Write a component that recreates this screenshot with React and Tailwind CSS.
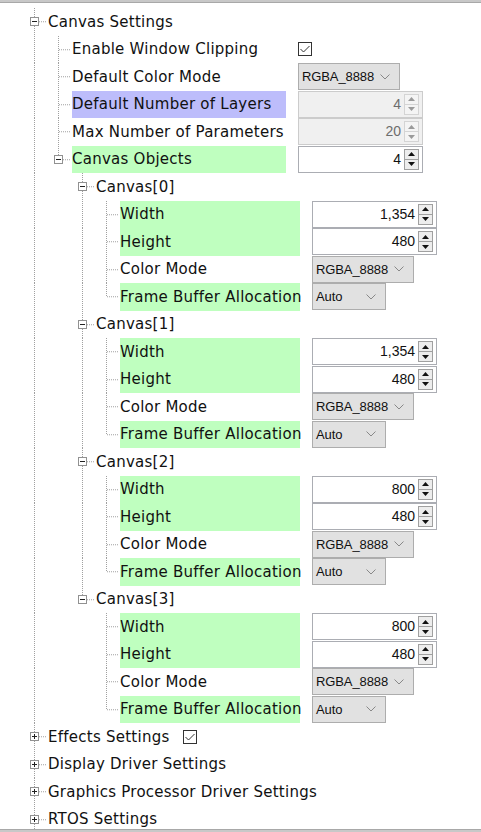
import React from 'react';

const GREEN = 'bg-[#bfffbf]';
const LAVENDER = 'bg-[#bdbdfb]';

// guides: ancestor levels whose line passes through the row, conn: own connector shape
const rows = [
  { level: 0, label: 'Canvas Settings', exp: 'minus', guides: [], conn: 'T' },
  { level: 1, label: 'Enable Window Clipping', guides: [0], conn: 'T', lw: 'w-[214px]', value: { type: 'check' } },
  { level: 1, label: 'Default Color Mode', guides: [0], conn: 'T', lw: 'w-[214px]', value: { type: 'select', text: 'RGBA_8888', w: 'w-[102px]' } },
  { level: 1, label: 'Default Number of Layers', guides: [0], conn: 'T', lw: 'w-[214px]', hl: LAVENDER, value: { type: 'spin', text: '4', disabled: true } },
  { level: 1, label: 'Max Number of Parameters', guides: [0], conn: 'T', lw: 'w-[214px]', value: { type: 'spin', text: '20', disabled: true } },
  { level: 1, label: 'Canvas Objects', exp: 'minus', guides: [0], conn: 'L', lw: 'w-[214px]', hl: GREEN, value: { type: 'spin', text: '4' } },
];

const canvases = [
  { name: 'Canvas[0]', width: '1,354', last: false },
  { name: 'Canvas[1]', width: '1,354', last: false },
  { name: 'Canvas[2]', width: '800', last: false },
  { name: 'Canvas[3]', width: '800', last: true },
];

canvases.forEach((c) => {
  const g = c.last ? [0] : [0, 2];
  rows.push({ level: 2, label: c.name, exp: 'minus', guides: [0], conn: c.last ? 'L' : 'T' });
  rows.push({ level: 3, label: 'Width', guides: g, conn: 'T', lw: 'w-[180px]', hl: GREEN, value: { type: 'spin', text: c.width } });
  rows.push({ level: 3, label: 'Height', guides: g, conn: 'T', lw: 'w-[180px]', hl: GREEN, value: { type: 'spin', text: '480' } });
  rows.push({ level: 3, label: 'Color Mode', guides: g, conn: 'T', lw: 'w-[180px]', value: { type: 'select', text: 'RGBA_8888', w: 'w-[102px]' } });
  rows.push({ level: 3, label: 'Frame Buffer Allocation', guides: g, conn: 'L', lw: 'w-[180px]', hl: GREEN, value: { type: 'select', text: 'Auto', w: 'w-[74px]' } });
});

rows.push({ level: 0, label: 'Effects Settings', exp: 'plus', guides: [], conn: 'T', lw: 'w-[123px]', value: { type: 'check' } });
rows.push({ level: 0, label: 'Display Driver Settings', exp: 'plus', guides: [], conn: 'T' });
rows.push({ level: 0, label: 'Graphics Processor Driver Settings', exp: 'plus', guides: [], conn: 'T' });
rows.push({ level: 0, label: 'RTOS Settings', exp: 'plus', guides: [], conn: 'T' });

const DOT = { stroke: '#a0a0a0', strokeWidth: 1, strokeDasharray: '1 1' };

const GuideCell = ({ line }) => (
  <div className="relative h-full w-6 shrink-0">
    {line && (
      <svg className="absolute inset-0 h-full w-full">
        <line x1="12.5" y1="0" x2="12.5" y2="100%" style={DOT} />
      </svg>
    )}
  </div>
);

const Expander = ({ kind }) => (
  <svg width="9" height="9" viewBox="0 0 9 9" className="relative">
    <rect x="0.5" y="0.5" width="8" height="8" fill="#fff" stroke="#919191" />
    <line x1="2" y1="4.5" x2="7" y2="4.5" stroke="#222" />
    {kind === 'plus' && <line x1="4.5" y1="2" x2="4.5" y2="7" stroke="#222" />}
  </svg>
);

const OwnCell = ({ conn, exp }) => (
  <div className="relative flex h-full w-6 shrink-0 items-center pl-[8px]">
    <svg className="absolute inset-0 h-full w-full">
      <line x1="12.5" y1="0" x2="12.5" y2={conn === 'L' ? '50%' : '100%'} style={DOT} />
      <line x1="13" y1="50%" x2="24" y2="50%" style={DOT} />
    </svg>
    {exp && <Expander kind={exp} />}
  </div>
);

const Checkbox = () => (
  <svg width="14" height="14" viewBox="0 0 14 14">
    <rect x="0.5" y="0.5" width="13" height="13" fill="#fff" stroke="#333" />
    <polyline points="2.5,7 5.5,10 11.5,4" fill="none" stroke="#333" strokeWidth="1" />
  </svg>
);

const Chevron = () => (
  <svg width="10" height="6" viewBox="0 0 10 6">
    <polyline points="0.5,0.5 5,5 9.5,0.5" fill="none" stroke="#888" strokeWidth="1" />
  </svg>
);

const Select = ({ text, w }) => (
  <div className={`flex h-[27px] items-center border border-[#adadad] bg-[#e1e1e1] pl-[3px] pr-[9px] ${w}`}>
    <span className="text-[13px] tracking-[-0.1px] text-[#111] [font-family:'Liberation_Sans',Arial,sans-serif]">{text}</span>
    <span className="ml-auto flex">
      <Chevron />
    </span>
  </div>
);

const Arrow = ({ up, color }) => (
  <svg width="7" height="4" viewBox="0 0 7 4">
    <polygon points={up ? '0,4 7,4 3.5,0' : '0,0 7,0 3.5,4'} fill={color} />
  </svg>
);

const Spinner = ({ text, disabled }) => (
  <div
    className={`flex h-[27px] w-[125px] items-center border ${
      disabled ? 'border-[#cccccc] bg-[#f0f0f0]' : 'border-[#abadb3] bg-white'
    }`}
  >
    <span
      className={`flex-1 pr-[3px] text-right text-[14px] tracking-normal [font-family:'Liberation_Sans',Arial,sans-serif] ${
        disabled ? 'text-[#6d6d6d]' : 'text-[#111]'
      }`}
    >
      {text}
    </span>
    <div
      className={`mr-[3px] flex h-[21px] w-[15px] flex-col border ${
        disabled ? 'border-[#d4d4d4] bg-[#f4f4f4]' : 'border-[#a0a0a0] bg-[#ededed]'
      }`}
    >
      <div className={`flex flex-1 items-center justify-center border-b ${disabled ? 'border-[#d4d4d4]' : 'border-[#a0a0a0]'}`}>
        <Arrow up color={disabled ? '#9a9a9a' : '#111'} />
      </div>
      <div className="flex flex-1 items-center justify-center">
        <Arrow color={disabled ? '#9a9a9a' : '#111'} />
      </div>
    </div>
  </div>
);

const Value = ({ v }) => {
  if (v.type === 'check') return <Checkbox />;
  if (v.type === 'select') return <Select text={v.text} w={v.w} />;
  return <Spinner text={v.text} disabled={v.disabled} />;
};

const Row = ({ r }) => {
  const cells = [];
  for (let i = 0; i < r.level; i++) cells.push(<GuideCell key={i} line={r.guides.includes(i)} />);
  return (
    <div className="flex h-[27.5px] shrink-0 items-center">
      <div className="w-[22px] shrink-0" />
      {cells}
      <OwnCell conn={r.conn} exp={r.exp} />
      <div className={`ml-[2px] flex h-full shrink-0 items-center whitespace-nowrap ${r.lw || ''} ${r.hl || ''}`}>
        {r.label}
      </div>
      {r.value && (
        <div className="ml-3 flex items-center">
          <Value v={r.value} />
        </div>
      )}
    </div>
  );
};

export default function App() {
  return (
    <div className="flex h-[832px] w-[481px] flex-col overflow-hidden bg-white text-[15px] tracking-[0.25px] text-[#111] [font-family:'DejaVu_Sans',Verdana,sans-serif]">
      <div className="h-[3px] shrink-0 border-b border-[#a8a8a8] bg-[#c8c8c8]" />
      <div className="flex min-h-0 flex-1 flex-col overflow-hidden pt-[5px]">
        {rows.map((r, i) => (
          <Row key={i} r={r} />
        ))}
      </div>
      <div className="h-[3px] shrink-0 border-t border-[#a8a8a8] bg-[#c8c8c8]" />
    </div>
  );
}
